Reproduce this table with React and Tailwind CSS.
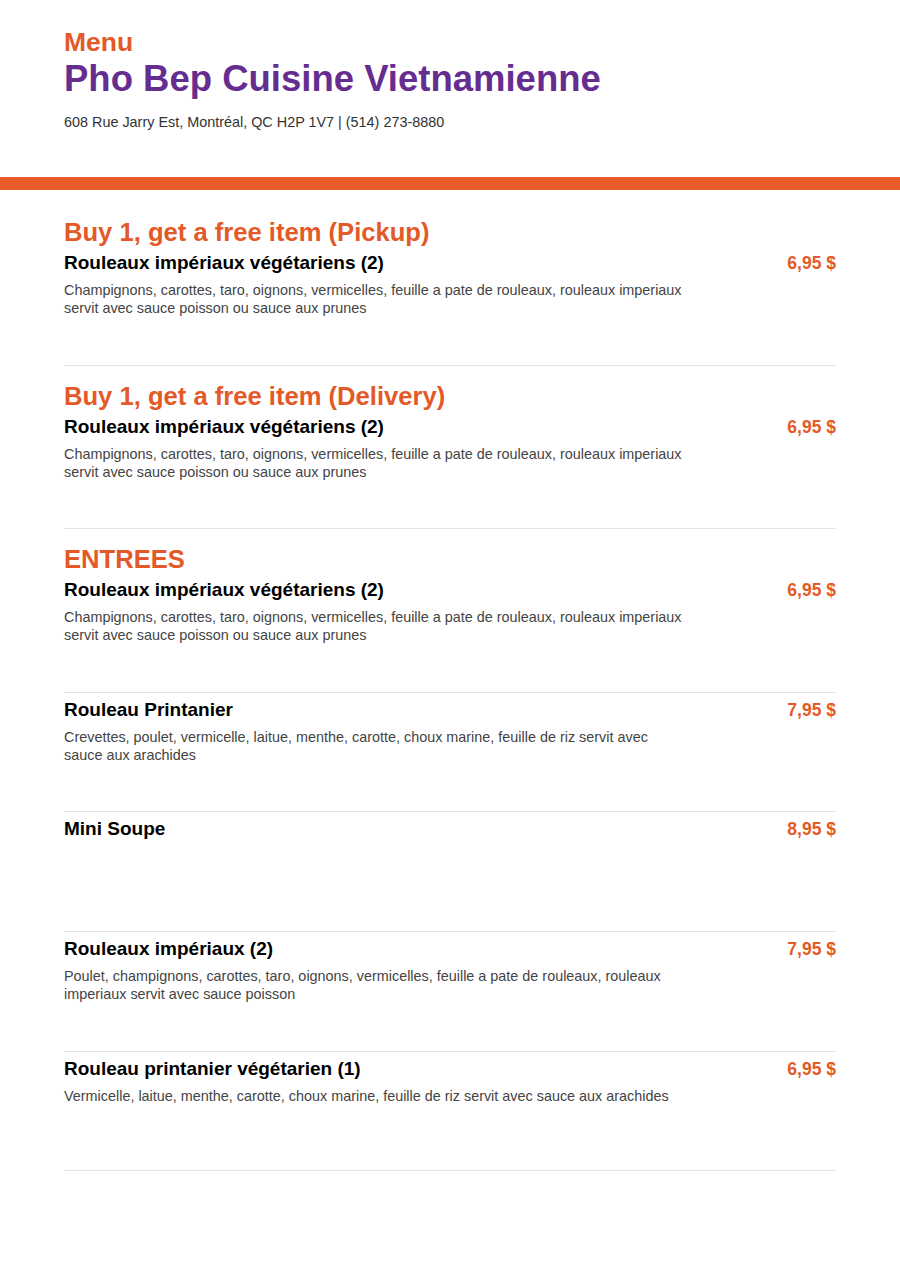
const sections = [
  {
    title: "Buy 1, get a free item (Pickup)",
    items: [
      {
        name: "Rouleaux impériaux végétariens (2)",
        price: "6,95 $",
        desc: "Champignons, carottes, taro, oignons, vermicelles, feuille a pate de rouleaux, rouleaux imperiaux servit avec sauce poisson ou sauce aux prunes",
      },
    ],
  },
  {
    title: "Buy 1, get a free item (Delivery)",
    items: [
      {
        name: "Rouleaux impériaux végétariens (2)",
        price: "6,95 $",
        desc: "Champignons, carottes, taro, oignons, vermicelles, feuille a pate de rouleaux, rouleaux imperiaux servit avec sauce poisson ou sauce aux prunes",
      },
    ],
  },
  {
    title: "ENTREES",
    items: [
      {
        name: "Rouleaux impériaux végétariens (2)",
        price: "6,95 $",
        desc: "Champignons, carottes, taro, oignons, vermicelles, feuille a pate de rouleaux, rouleaux imperiaux servit avec sauce poisson ou sauce aux prunes",
      },
      {
        name: "Rouleau Printanier",
        price: "7,95 $",
        desc: "Crevettes, poulet, vermicelle, laitue, menthe, carotte, choux marine, feuille de riz servit avec sauce aux arachides",
      },
      { name: "Mini Soupe", price: "8,95 $", desc: "" },
      {
        name: "Rouleaux impériaux (2)",
        price: "7,95 $",
        desc: "Poulet, champignons, carottes, taro, oignons, vermicelles, feuille a pate de rouleaux, rouleaux imperiaux servit avec sauce poisson",
      },
      {
        name: "Rouleau printanier végétarien (1)",
        price: "6,95 $",
        desc: "Vermicelle, laitue, menthe, carotte, choux marine, feuille de riz servit avec sauce aux arachides",
      },
    ],
  },
];

const MenuItem = ({ item }) => (
  <div className="flex justify-between h-[119.6px] pt-[7px] border-b border-[#e3e3e3]">
    <div className="w-[618px]">
      <h3 className="text-[19px] leading-[20px] font-bold text-black">{item.name}</h3>
      {item.desc && (
        <p className="mt-[8px] text-[14.4px] leading-[18px] text-[#444]">{item.desc}</p>
      )}
    </div>
    <span className="text-[17.5px] leading-[20px] font-bold text-[#e35a28]">{item.price}</span>
  </div>
);

export default function App() {
  return (
    <div className="min-h-screen bg-white font-['Liberation_Sans',Arial,sans-serif]">
      <header className="px-16 pt-[27px] pb-[46px]">
        <p className="text-[26.5px] leading-[30px] font-bold text-[#e35a28]">Menu</p>
        <h1 className="text-[36.5px] leading-[44px] font-bold text-[#662d91]">
          Pho Bep Cuisine Vietnamienne
        </h1>
        <p className="mt-[12px] text-[14.4px] leading-[18px] text-[#333]">
          608 Rue Jarry Est, Montréal, QC H2P 1V7 | (514) 273-8880
        </p>
      </header>
      <div className="h-[13px] bg-[#e85a27]" />
      <main className="px-16 pt-[12px]">
        {sections.map((s) => (
          <section key={s.title}>
            <h2 className="pt-4 text-[25.6px] leading-[28px] font-bold text-[#e35a28]">
              {s.title}
            </h2>
            {s.items.map((item, i) => (
              <MenuItem key={i} item={item} />
            ))}
          </section>
        ))}
      </main>
    </div>
  );
}
